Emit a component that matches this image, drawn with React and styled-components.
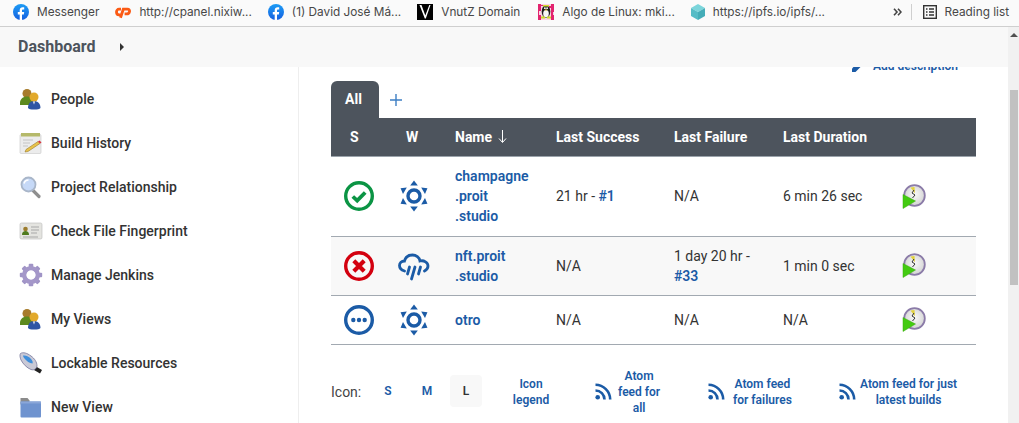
import React from "react";
import styled, { createGlobalStyle } from "styled-components";

const Global = createGlobalStyle`
  html, body { margin: 0; padding: 0; height: 423px; overflow: hidden; background: #fff; }
  * { box-sizing: border-box; }
`;
const Page = styled.div`width: 1019px; height: 423px; display: flex; flex-direction: column; overflow: hidden; font-family: Roboto, "Liberation Sans", sans-serif;`;
const BookmarkBar = styled.div`
  height: 27px; flex: none; display: flex; align-items: center; padding: 0 10px 2px 13px;
  background: #fafafa; border-bottom: 1px solid #cfcfcf;
  font-family: Inter, sans-serif; font-size: 11.8px; color: #474747;
`;
const Bookmark = styled.div`display: flex; align-items: center; gap: 8px; margin-right: ${p => p.$gap}px; white-space: nowrap;`;
const Chevrons = styled.div`margin-left: auto; display: flex; align-items: center;`;
const Divider = styled.div`width: 1px; height: 16px; background: #cfcfcf; margin: 0 11px 0 9px;`;
const Body = styled.div`flex: 1; display: flex; min-height: 0;`;
const Column = styled.div`flex: 1; display: flex; flex-direction: column; min-width: 0;`;
const Crumbs = styled.div`
  height: 40px; flex: none; display: flex; align-items: center; padding: 0 0 1px 18px; background: #f8f8f8;
  font-size: 16px; font-weight: 700; color: #4d545d; gap: 22px;
`;
const Caret = styled.div`width: 0; height: 0; margin-left: 3px; border-left: 4px solid #333; border-top: 4px solid transparent; border-bottom: 4px solid transparent;`;
const Main = styled.div`flex: 1; display: flex; min-height: 0; overflow: hidden;`;
const Side = styled.nav`width: 299px; flex: none; border-right: 1px solid #eee; padding: 10px 0 0 19px; display: flex; flex-direction: column;`;
const SideItem = styled.div`height: 44px; flex: none; display: flex; align-items: center; gap: 8px; font-size: 14px; font-weight: 500; color: #333;`;
const Content = styled.section`flex: 1; min-width: 0; padding: 0 32px 0 32px;`;
const DescRow = styled.div`height: 14px; margin-top: -8px; display: flex; justify-content: flex-end; align-items: center; gap: 8px; padding-right: 18px; color: #1b5ba6; font-size: 12px; font-weight: 600;`;
const Tabs = styled.div`display: flex; align-items: center; margin-top: 8px; height: 37px;`;
const Tab = styled.div`width: 48px; height: 37px; background: #4d545d; color: #fff; border-radius: 6px 6px 0 0; font-size: 14px; font-weight: 700; display: flex; align-items: center; justify-content: center; padding: 0 3px 2px 0;`;
const AddTab = styled.div`margin-left: 11px; display: flex; padding-top: 1px;`;
const Table = styled.table`width: 645px; table-layout: fixed; border-collapse: collapse; font-size: 14px; color: #333; line-height: 20px;`;
const Col = styled.col`width: ${p => p.$w}px;`;
const HeadRow = styled.tr`height: 38px; background: #4d545d; color: #fff; border-bottom: 1px solid #9ba3ab;`;
const Th = styled.th`text-align: left; font-weight: 700; font-size: 14px; padding: 0 0 0 ${p => p.$pad ?? 14}px; white-space: nowrap;`;
const NameHead = styled.span`display: inline-flex; align-items: center; gap: 6px;`;
const Row = styled.tr`height: ${p => p.$h}px; background: ${p => p.$alt ? "#f8f8f8" : "#fff"}; border-bottom: 1px solid #a2a9b1;`;
const Td = styled.td`padding: 0 0 0 14px; white-space: nowrap;`;
const IconCell = styled.td`padding: 0; text-align: center; line-height: 0;`;
const BuildCell = styled.td`padding: 0 0 0 14px; line-height: 0;`;
const JobLink = styled.a`color: #1b5ba6; font-weight: 600;`;
const BuildLink = styled.a`color: #1b5ba6; font-weight: 600;`;
const Footer = styled.div`display: flex; align-items: center; height: 48px; margin-top: 23px; font-size: 12px; font-weight: 600; color: #1b5ba6; line-height: 16px; text-align: center;`;
const IconLabel = styled.div`font-size: 14px; font-weight: 400; color: #444; width: 41px; text-align: left;`;
const SizeBtn = styled.div`width: 32px; height: 32px; margin: 0 ${p => p.$mr}px 2px 0; padding-top: 1px; border-radius: 4px; display: flex; align-items: center; justify-content: center; background: ${p => p.$on ? "#f8f8f8" : "transparent"}; color: ${p => p.$on ? "#333" : "#1b5ba6"};`;
const LegendLink = styled.div`width: 60px; margin-right: 34px;`;
const Feed = styled.div`display: flex; align-items: center; gap: ${p => p.$g}px; width: ${p => p.$w}px; margin-right: ${p => p.$mr}px;`;
const Scrollbar = styled.div`width: 11px; flex: none; background: #f1f1f1; padding-left: 2px; display: flex; flex-direction: column;`;
const ScrollUp = styled.div`width: 0; height: 0; margin: 6px 0 0 0; border-left: 4px solid transparent; border-right: 4px solid transparent; border-bottom: 4px solid #505050;`;
const Thumb = styled.div`width: 8px; height: 195px; margin-top: 53px; background: #c1c1c1;`;

const Fb = () => (
  <svg width="16" height="16" viewBox="0 0 16 16">
    <defs><linearGradient id="fbg" x1="0" y1="0" x2="0" y2="1"><stop offset="0" stopColor="#1c9cf5" /><stop offset="1" stopColor="#1560e0" /></linearGradient></defs>
    <circle cx="8" cy="8" r="8" fill="url(#fbg)" />
    <path d="M6.7 16V10.4H4.8V8h1.9V6.3c0-2 1.2-3 2.9-3 .9 0 1.6.1 1.6.1v2h-1c-1 0-1.2.5-1.2 1.2V8h2.2l-.4 2.4H9V16z" fill="#fff" />
  </svg>
);
const CPanel = () => (
  <svg width="16" height="16" viewBox="0 0 16 16" fill="none" stroke="#fb5a14" strokeWidth="2.800">
    <path d="M6 5.200H4C2.500 5.200 1.500 6.500 1.500 8s1 2.800 2.500 2.800H5.800" />
    <path d="M5.500 13.800 8.300 5.200H12.500C14 5.200 14.800 6.300 14.500 7.600 14.200 9 13 9.900 11.700 9.900H9.600" />
  </svg>
);
const VLogo = () => (
  <svg width="16" height="16" viewBox="0 0 16 16">
    <rect width="16" height="16" fill="#000" />
    <path d="M2.500 1 7.800 14.500 8.800 14.500 13.500 1 12.300 1 8.300 11.500 4.500 1Z" fill="#fff" />
  </svg>
);
const Tux = () => (
  <svg width="16" height="16" viewBox="0 0 16 16">
    <rect width="16" height="16" fill="#fbd3e2" />
    <path d="M0 0h3v7H1v4h2v5H0zM13 0h3v8h-1v3h1v5h-3z" fill="#e2246e" />
    <rect x="3" y="1" width="3" height="1" fill="#e2246e" /><rect x="11" y="2" width="2" height="2" fill="#e2246e" />
    <ellipse cx="8" cy="7.500" rx="4.300" ry="6.500" fill="#1e1e1e" />
    <ellipse cx="8" cy="9.800" rx="2.800" ry="3.700" fill="#f6f6f6" />
    <rect x="5" y="1" width="6" height="1.500" fill="#d9dc2c" />
    <circle cx="6.900" cy="4.200" r=".9" fill="#fff" /><circle cx="9.100" cy="4.200" r=".9" fill="#fff" />
    <rect x="3" y="12.500" width="4" height="2" fill="#c9dc2c" /><rect x="9" y="12.500" width="4" height="2" fill="#c9dc2c" />
    <path d="M6.500 5.500h3L8 7z" fill="#e8c92a" />
  </svg>
);
const Cube = () => (
  <svg width="14" height="16" viewBox="0 0 14 16">
    <path d="M7 0 14 4 7 8 0 4Z" fill="#7bd5db" />
    <path d="M0 4 7 8V16L0 12Z" fill="#55bcc6" />
    <path d="M14 4 7 8V16L14 12Z" fill="#45adb8" />
  </svg>
);
const DoubleChevron = () => (
  <svg width="9" height="8" viewBox="0 0 9 8" fill="none" stroke="#444" strokeWidth="1.600">
    <path d="M1 .8 4 4 1 7.200M5 .8 8 4 5 7.200" />
  </svg>
);
const ReadingList = () => (
  <svg width="14" height="14" viewBox="0 0 14 14" fill="none" stroke="#333">
    <rect x=".7" y=".7" width="12.600" height="12.600" strokeWidth="1.400" />
    <path d="M3 4h1.500M6 4h5M3 7h1.500M6 7h5M3 10h1.500M6 10h5" strokeWidth="1.300" />
  </svg>
);

const People = () => (
  <svg width="24" height="24" viewBox="0 0 24 24">
    <circle cx="8" cy="6.500" r="4.500" fill="#a77b2b" />
    <path d="M1 16c0-4 3-6.500 7-6.500s6 2 6 6.500v2H1z" fill="#5d8a1e" />
    <path d="M9 21c0-4.500 2.500-7 6-7s6.500 2.500 6.500 7c-1 1-3 1.500-6.500 1.500S10 22 9 21z" fill="#2f55a4" />
    <circle cx="15" cy="10" r="4.500" fill="#e2a92a" />
    <path d="M14 14.500h2l-1 3z" fill="#fff" />
  </svg>
);
const Notepad = () => (
  <svg width="24" height="24" viewBox="0 0 24 24">
    <rect x="1" y="3.500" width="21" height="19" rx="1" fill="#ececec" stroke="#c8c8c8" strokeWidth=".6" />
    <rect x="2" y="2" width="19" height="3.500" fill="#b5b96a" />
    <path d="M4 9h10M4 12h7M4 15h5" stroke="#c4c4c4" />
    <path d="M7 18.500 19 10.500 21 12.500 9 20.500 6 21Z" fill="#e8c24a" stroke="#8a6d20" strokeWidth=".5" />
    <path d="M19 10.500 20.500 9.500 22.500 11.500 21 12.500Z" fill="#d8323c" />
  </svg>
);
const Magnifier = () => (
  <svg width="24" height="24" viewBox="0 0 24 24">
    <path d="M14 15.500 20 21.500" stroke="#8f8f8f" strokeWidth="3.200" strokeLinecap="round" />
    <circle cx="9.500" cy="9.500" r="7" fill="#c6d9f7" stroke="#a9b6c9" strokeWidth="1.800" />
    <path d="M5 8.500c.5-2 2-3.500 4.500-3.500" stroke="#fff" strokeWidth="1.500" fill="none" />
  </svg>
);
const IdCard = () => (
  <svg width="24" height="24" viewBox="0 0 24 24">
    <rect x="1" y="4" width="22" height="16" rx="1.500" fill="#e4e4e0" stroke="#bbb" strokeWidth=".6" />
    <circle cx="6.500" cy="10" r="2.300" fill="#9b7b2c" />
    <path d="M3 16c0-3 1.500-4 3.500-4s3.500 1 3.500 4z" fill="#4f7a1e" />
    <path d="M12 8h8M12 11h8M12 14h6M4 18h15" stroke="#a8a8a8" />
  </svg>
);
const Gear = () => {
  const teeth = [0, 45, 90, 135, 180, 225, 270, 315];
  return (
    <svg width="24" height="24" viewBox="0 0 24 24">
      {teeth.map(a => <rect key={a} x="9.700" y=".8" width="4.600" height="6" rx="1" fill="#a094c6" transform={`rotate(${a} 12 12)`} />)}
      <circle cx="12" cy="12" r="6.800" fill="none" stroke="#a497c9" strokeWidth="4.500" />
      <circle cx="12" cy="12" r="4.400" fill="#fff" />
    </svg>
  );
};
const Usb = () => (
  <svg width="24" height="24" viewBox="0 0 24 24">
    <path d="M17 15.500 23 19 21 22.500 15 19Z" fill="#222" />
    <path d="M1.500 2.500C4 .8 8 2 12 5c3.500 2.500 6 6 6 10-.5 3-3 4.500-6 3.500C8 17 4 13 2 9 1 6.500.5 4 1.500 2.500Z" fill="#c9c9d6" stroke="#76769a" strokeWidth=".8" />
    <path d="M4 4.500c3-.5 6 1 8 3.500 1.500 1.500 2 3 1.500 4.500-3 0-6-2.500-8-5C4.500 6.500 4 5.500 4 4.500Z" fill="#3e8edb" />
  </svg>
);
const Folder = () => (
  <svg width="24" height="24" viewBox="0 0 24 24">
    <path d="M1.500 3h7l2 2.500v4H1.500z" fill="#8b8b8b" />
    <rect x="1.500" y="6.500" width="20.500" height="16" rx="1" fill="#6f93cf" />
    <rect x="1.500" y="6.500" width="20.500" height="2" fill="#8aa6d8" />
  </svg>
);
const Pencil = () => (
  <svg width="13" height="12" viewBox="0 0 13 12"><path d="M0 12V8.500L8 .5 11.500 4 3.500 12Z" fill="#1b5ba6" /></svg>
);
const Plus = () => (
  <svg width="12" height="12" viewBox="0 0 12 12"><path d="M6 0V12M0 6H12" stroke="#3e7fc4" strokeWidth="1.400" /></svg>
);
const SortDown = () => (
  <svg width="9" height="13" viewBox="0 0 9 13" fill="none" stroke="#fff" strokeWidth="1"><path d="M4.500 0V12M1 8.500 4.500 12.500 8 8.500" /></svg>
);
const StatusRing = ({ color, children }) => (
  <svg width="32" height="32" viewBox="0 0 32 32" fill="none">
    <circle cx="16" cy="16" r="13.300" stroke={color} strokeWidth="3.400" />
    {children}
  </svg>
);
const Ok = () => <StatusRing color="#0b9444"><path d="M9.800 16.500 14.200 20.700 22.200 12.500" stroke="#0b9444" strokeWidth="3.800" /></StatusRing>;
const Fail = () => <StatusRing color="#d3000f"><path d="M10.800 10.800 21.200 21.200M21.200 10.800 10.800 21.200" stroke="#d3000f" strokeWidth="4.200" /></StatusRing>;
const Pending = () => (
  <StatusRing color="#1b5ba6">
    <circle cx="10.300" cy="16" r="2.200" fill="#1b5ba6" /><circle cx="16" cy="16" r="2.200" fill="#1b5ba6" /><circle cx="21.700" cy="16" r="2.200" fill="#1b5ba6" />
  </StatusRing>
);
const Sun = () => (
  <svg width="32" height="32" viewBox="0 0 32 32">
    <circle cx="16" cy="16" r="6" fill="none" stroke="#1b5ba6" strokeWidth="3.400" />
    {[0, 60, 120, 180, 240, 300].map(a => <path key={a} d="M16 .5 19.800 5.500H12.200Z" fill="#1b5ba6" transform={`rotate(${a} 16 16)`} />)}
  </svg>
);
const Rain = () => (
  <svg width="32" height="32" viewBox="0 0 32 32" fill="none" stroke="#1b5ba6" strokeWidth="2.800" strokeLinecap="round">
    <path d="M6.500 21C3.500 20 1.500 18 1.500 15.500S3.500 11 6.500 11C7.500 7 11 5 14.500 5s7 2.500 7.500 6c4-1 8 1.500 8 5 0 2.500-1.500 4-3.500 5" />
    <path d="M11.500 17 9.500 24M17 17 13.500 29M22.500 17 20.500 24" />
  </svg>
);
const Schedule = () => (
  <svg width="24" height="25" viewBox="0 0 24 25">
    <defs><radialGradient id="clk" cx=".5" cy=".45" r=".6"><stop offset="0" stopColor="#fafafa" /><stop offset="1" stopColor="#cfcfcf" /></radialGradient></defs>
    <circle cx="12.500" cy="11.500" r="10.300" fill="url(#clk)" stroke="#8b7ba8" strokeWidth="1.800" />
    <path d="M8.500 3.500 12.500 3 13 9.500Z" fill="#e3d23c" />
    <path d="M12 6 10 9 13 11 10.500 14" stroke="#333" strokeWidth="1" fill="none" />
    <path d="M1 10.500 13.500 17 1 24.500Z" fill="#43cb10" stroke="#38a80d" strokeWidth=".5" />
  </svg>
);
const Rss = () => (
  <svg width="17" height="17" viewBox="0 0 17 17" fill="none" stroke="#1b5ba6" strokeWidth="2.600">
    <circle cx="2.700" cy="14.300" r="2.300" fill="#1b5ba6" stroke="none" />
    <path d="M.5 7.500c5 0 9 4 9 9M.5 1.800c8 0 14.700 6.700 14.700 14.700" />
  </svg>
);

const navItems = [
  ["People", People], ["Build History", Notepad], ["Project Relationship", Magnifier], ["Check File Fingerprint", IdCard],
  ["Manage Jenkins", Gear], ["My Views", People], ["Lockable Resources", Usb], ["New View", Folder],
];

export default function App() {
  return (
    <Page>
      <Global />
      <BookmarkBar>
        <Bookmark $gap={16}><Fb />Messenger</Bookmark>
        <Bookmark $gap={16}><CPanel />http://cpanel.nixiw...</Bookmark>
        <Bookmark $gap={16}><Fb />(1) David José Má...</Bookmark>
        <Bookmark $gap={18}><VLogo />VnutZ Domain</Bookmark>
        <Bookmark $gap={16}><Tux />Algo de Linux: mki...</Bookmark>
        <Bookmark $gap={0}><Cube />https://ipfs.io/ipfs/...</Bookmark>
        <Chevrons><DoubleChevron /><Divider /><Bookmark $gap={0}><ReadingList />Reading list</Bookmark></Chevrons>
      </BookmarkBar>
      <Body>
        <Column>
          <Crumbs>Dashboard<Caret /></Crumbs>
          <Main>
            <Side>
              {navItems.map(([label, Icon]) => <SideItem key={label}><Icon />{label}</SideItem>)}
            </Side>
            <Content>
              <DescRow><Pencil />Add description</DescRow>
              <Tabs><Tab>All</Tab><AddTab><Plus /></AddTab></Tabs>
              <Table>
                <colgroup><Col $w={56} /><Col $w={54} /><Col $w={101} /><Col $w={118} /><Col $w={109} /><Col $w={119} /><Col $w={88} /></colgroup>
                <thead>
                  <HeadRow>
                    <Th $pad={19}>S</Th><Th $pad={19}>W</Th><Th><NameHead>Name <SortDown /></NameHead></Th><Th>Last Success</Th><Th>Last Failure</Th><Th>Last Duration</Th><Th />
                  </HeadRow>
                </thead>
                <tbody>
                  <Row $h={80}>
                    <IconCell><Ok /></IconCell><IconCell><Sun /></IconCell>
                    <Td><JobLink>champagne<br />.proit<br />.studio</JobLink></Td>
                    <Td>21 hr - <BuildLink>#1</BuildLink></Td><Td>N/A</Td><Td>6 min 26 sec</Td>
                    <BuildCell><Schedule /></BuildCell>
                  </Row>
                  <Row $alt $h={59}>
                    <IconCell><Fail /></IconCell><IconCell><Rain /></IconCell>
                    <Td><JobLink>nft.proit<br />.studio</JobLink></Td>
                    <Td>N/A</Td><Td>1 day 20 hr -<br /><BuildLink>#33</BuildLink></Td><Td>1 min 0 sec</Td>
                    <BuildCell><Schedule /></BuildCell>
                  </Row>
                  <Row $h={49}>
                    <IconCell><Pending /></IconCell><IconCell><Sun /></IconCell>
                    <Td><JobLink>otro</JobLink></Td>
                    <Td>N/A</Td><Td>N/A</Td><Td>N/A</Td>
                    <BuildCell><Schedule /></BuildCell>
                  </Row>
                </tbody>
              </Table>
              <Footer>
                <IconLabel>Icon:</IconLabel>
                <SizeBtn $mr={7}>S</SizeBtn><SizeBtn $mr={7}>M</SizeBtn><SizeBtn $on $mr={19}>L</SizeBtn>
                <LegendLink>Icon<br />legend</LegendLink>
                <Feed $w={70} $g={6} $mr={43}><Rss /><span>Atom<br />feed for<br />all</span></Feed>
                <Feed $w={90} $g={8} $mr={41}><Rss /><span>Atom feed<br />for failures</span></Feed>
                <Feed $w={120} $g={4} $mr={0}><Rss /><span>Atom feed for just<br />latest builds</span></Feed>
              </Footer>
            </Content>
          </Main>
        </Column>
        <Scrollbar><ScrollUp /><Thumb /></Scrollbar>
      </Body>
    </Page>
  );
}
